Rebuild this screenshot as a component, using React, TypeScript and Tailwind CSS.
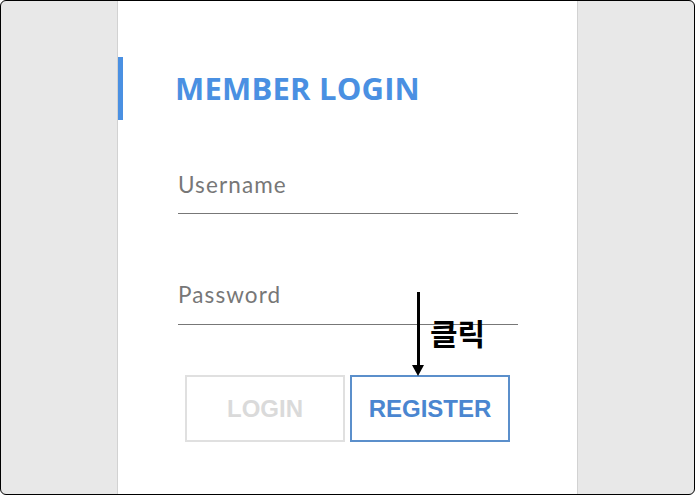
export default function App() {
  return (
    <div className="w-[695px] h-[495px] bg-white">
      <div className="relative flex h-full w-full justify-center overflow-hidden rounded-[6px] border border-black bg-[#e8e8e8]">
        <div className="relative flex h-full w-[461px] flex-col border-x border-[#d2d2d2] bg-white pt-[56px]">
          <div className="flex items-center">
            <div className="h-[63px] w-[5px] bg-[#4a90e2]" />
            <h1 className="ml-[52px] font-['Open_Sans',sans-serif] text-[31px] font-bold leading-none tracking-[0.2px] text-[#4a90e2]">
              MEMBER LOGIN
            </h1>
          </div>

          <div className="ml-[60px] mt-[51px] w-[340px] font-['Lato',sans-serif] text-[22.5px] tracking-[1.1px] text-[#777]">
            <div className="border-b border-[#777] pb-[15px] leading-[27px]">Username</div>
            <div className="mt-[67px] border-b border-[#777] pb-[16px] leading-[27px]">Password</div>
          </div>

          <div className="ml-[67px] mt-[50px] flex gap-[5px] font-['Liberation_Sans',Arial,sans-serif] text-[24px] font-bold">
            <button className="flex h-[67px] w-[160px] items-center justify-center border-2 border-[#e0e0e0] text-[#dadada]">
              LOGIN
            </button>
            <button className="flex h-[67px] w-[160px] items-center justify-center border-2 border-[#5b8fcb] text-[#4a86d0]">
              REGISTER
            </button>
          </div>

          <div className="absolute left-[294px] top-[291px] flex flex-col items-center">
            <div className="h-[74px] w-[3px] bg-black" />
            <svg width="12" height="11" viewBox="0 0 12 11" className="-mt-[1px]">
              <polygon points="0,0 12,0 6,11" fill="black" />
            </svg>
          </div>
          <div className="absolute left-[312px] top-[316px] font-['Noto_Sans_CJK_KR',sans-serif] text-[30px] font-bold leading-none text-black">
            클릭
          </div>
        </div>
      </div>
    </div>
  );
}
